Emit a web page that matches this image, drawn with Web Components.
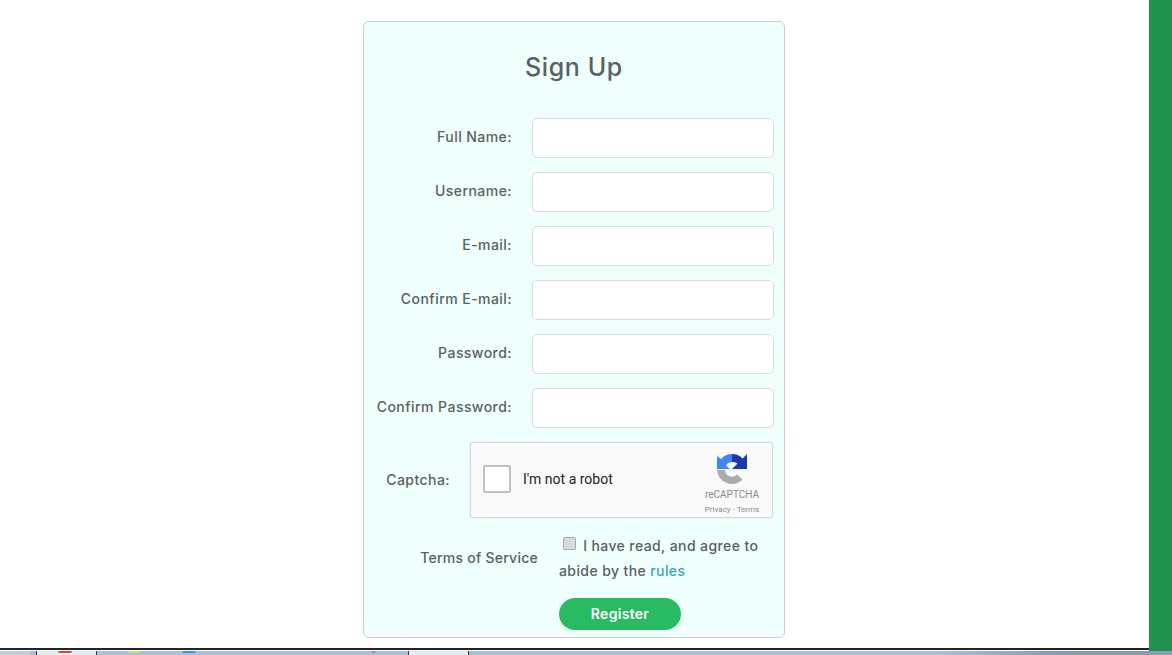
<!DOCTYPE html>
<html>
<head>
<meta charset="utf-8">
<title>Sign Up</title>
<style>
    html, body { margin: 0; height: 100%; background: #fff; overflow: hidden; }
    body { font-family: Inter, "Liberation Sans", sans-serif; }
</style>
</head>
<body>
<app-screen>
    <signup-card heading="Sign Up">
        <form-row label="Full Name:"></form-row>
        <form-row label="Username:"></form-row>
        <form-row label="E-mail:"></form-row>
        <form-row label="Confirm E-mail:"></form-row>
        <form-row label="Password:"></form-row>
        <form-row label="Confirm Password:"></form-row>
        <captcha-row label="Captcha:"></captcha-row>
        <terms-row label="Terms of Service"></terms-row>
        <pill-button>Register</pill-button>
    </signup-card>
</app-screen>
<task-bar></task-bar>

<template id="app-screen">
    <style>
        :host { display: flex; height: 651px; }
        main { flex: 1; display: flex; flex-direction: column; }
        .stage { flex: 1; padding: 21px 1px 0 0; box-sizing: border-box; }
        .line { height: 2px; margin-bottom: 1px; background: #1e2428; }
        aside { width: 23px; background: #20914f; }
    </style>
    <main>
        <div class="stage"><slot></slot></div>
        <div class="line"></div>
    </main>
    <aside></aside>
</template>

<template id="signup-card">
    <style>
        :host {
            display: block;
            box-sizing: border-box;
            width: 422px;
            height: 617px;
            margin: 0 auto;
            background: #eefffc;
            border: 1px solid #c4d0ce;
            border-radius: 6px;
            color: #5b6062;
        }
        h1 {
            margin: 0;
            height: 96px;
            padding-top: 28px;
            box-sizing: border-box;
            font-size: 25px;
            line-height: 34px;
            font-weight: 500;
            text-align: center;
            letter-spacing: 0.6px;
        }
    </style>
    <h1 id="heading"></h1>
    <slot></slot>
</template>

<template id="form-row">
    <style>
        :host { display: flex; align-items: center; height: 40px; margin-bottom: 14px; }
        label { width: 148px; padding-bottom: 3px; text-align: right; font-size: 14px; font-weight: 500; white-space: nowrap; letter-spacing: 0.45px; }
        input {
            box-sizing: border-box;
            width: 242px;
            height: 40px;
            margin-left: 20px;
            background: #fff;
            border: 1px solid #d5dfdf;
            border-radius: 5px;
            outline: 0;
        }
    </style>
    <label id="label"></label>
    <input type="text">
</template>

<template id="captcha-row">
    <style>
        :host { display: flex; align-items: center; height: 76px; margin-bottom: 14px; }
        label { width: 86px; padding-bottom: 2px; text-align: right; font-size: 14px; font-weight: 500; letter-spacing: 0.45px; }
        .box {
            box-sizing: border-box;
            position: relative;
            width: 303px;
            height: 76px;
            margin-left: 20px;
            display: flex;
            align-items: center;
            background: #f9f9f9;
            border: 1px solid #d6d6d6;
            border-radius: 3px;
            box-shadow: 0 0 3px rgba(0,0,0,0.08);
            font-family: Roboto, "Liberation Sans", sans-serif;
            color: #000;
        }
        .tick {
            box-sizing: border-box;
            width: 28px;
            height: 28px;
            margin: 0 0 2px 12px;
            background: #fff;
            border: 2px solid #c1c1c1;
            border-radius: 2px;
        }
        .text { margin: 0 0 2px 12px; font-size: 14px; color: #222; }
        .brand {
            position: absolute;
            right: 12px;
            top: 10px;
            width: 56px;
            text-align: center;
            color: #8b8b8b;
        }
        svg { display: block; margin: 0 auto 3px; }
        .name { font-size: 10px; line-height: 13px; }
        .links { font-size: 8px; line-height: 10px; margin-top: 4px; white-space: nowrap; }
    </style>
    <label id="label"></label>
    <div class="box">
        <div class="tick"></div>
        <span class="text">I'm not a robot</span>
        <div class="brand">
            <svg width="32" height="32" viewBox="0 0 32 32">
                <path fill="#ababab" d="M1 17 h8 a7 7 0 0 0 12 4.500 l5.500 5 a15 15 0 0 1 -25.500 -9.500z"/>
                <path fill="#4285f4" d="M16 1 V9 a7 7 0 0 0 -6 3.500 l4 3.500 H1 V3 l4 3 a15 15 0 0 1 11 -5z"/>
                <path fill="#1c3aa9" d="M16 1 a15 15 0 0 1 10.600 4.400 l4.400 -4.400 v15 h-15 l5.500 -5.500 a7 7 0 0 0 -5.500 -1.500z"/>
            </svg>
            <div class="name">reCAPTCHA</div>
            <div class="links">Privacy - Terms</div>
        </div>
    </div>
</template>

<template id="terms-row">
    <style>
        :host { display: flex; align-items: center; height: 52px; font-size: 14px; font-weight: 500; }
        .label { width: 174px; padding-bottom: 2px; text-align: right; white-space: nowrap; letter-spacing: 0.25px; }
        .agree { width: 206px; margin-left: 21px; line-height: 25px; letter-spacing: 0.4px; }
        input {
            appearance: none;
            box-sizing: border-box;
            width: 13px;
            height: 13px;
            margin: 0 3px 0 4px;
            vertical-align: 1px;
            background: #d9d9e2;
            border: 1px solid #a9a9ad;
            border-radius: 2px;
        }
        a { color: #3ba5b5; text-decoration: none; }
    </style>
    <span class="label" id="label"></span>
    <div class="agree"><input type="checkbox"> I have read, and agree to abide by the <a href="#">rules</a></div>
</template>

<template id="pill-button">
    <style>
        :host { display: block; margin: 14px 0 0 195px; width: 122px; }
        button {
            display: block;
            width: 122px;
            height: 32px;
            padding: 0 0 2px;
            background: #2abb62;
            border: 0;
            border-radius: 16px;
            color: #fff;
            font: 600 14px Inter, "Liberation Sans", sans-serif;
            letter-spacing: 0.3px;
        }
    </style>
    <button><slot></slot></button>
</template>

<template id="task-bar">
    <style>
        :host {
            display: flex;
            position: relative;
            height: 4px;
            overflow: hidden;
            background: linear-gradient(to right, #a9bfdc 0, #a9bfdc 80%, #8a9cb2 90%, #8a9cb2 100%);
        }
        .start { width: 30px; background: #c4ccd8; }
        .gap { width: 6px; }
        .tab { width: 59px; background: #e6ebf3; border: solid #34393f; border-width: 0 1px; }
        .wide { width: 311px; }
        i { position: absolute; top: 0; height: 2px; border-radius: 0 0 4px 4px; }
    </style>
    <div class="start"></div>
    <div class="gap"></div>
    <div class="tab"></div>
    <div class="wide"></div>
    <div class="tab"></div>
    <i style="left: 58px; width: 14px; background: #d8433f"></i>
    <i style="left: 128px; width: 12px; background: #e3d95a"></i>
    <i style="left: 182px; width: 14px; background: #2f9be8"></i>
    <i style="left: 371px; width: 5px; background: #d779a0"></i>
</template>

<script>
    function shadowFrom(host, id) {
        const root = host.attachShadow({mode: 'open'});
        root.appendChild(document.getElementById(id).content.cloneNode(true));
        return root;
    }

    // all elements share the same shape: template + optional attribute texts
    function plain(name) {
        customElements.define(name, class extends HTMLElement {
            constructor() {
                super();
                shadowFrom(this, name);
            }
            connectedCallback() {
                const label = this.shadowRoot.getElementById('label');
                if (label) label.textContent = this.getAttribute('label');
                const heading = this.shadowRoot.getElementById('heading');
                if (heading) heading.textContent = this.getAttribute('heading');
            }
        });
    }

    ['app-screen', 'signup-card', 'form-row', 'captcha-row', 'terms-row', 'pill-button', 'task-bar'].forEach(plain);
</script>
</body>
</html>
